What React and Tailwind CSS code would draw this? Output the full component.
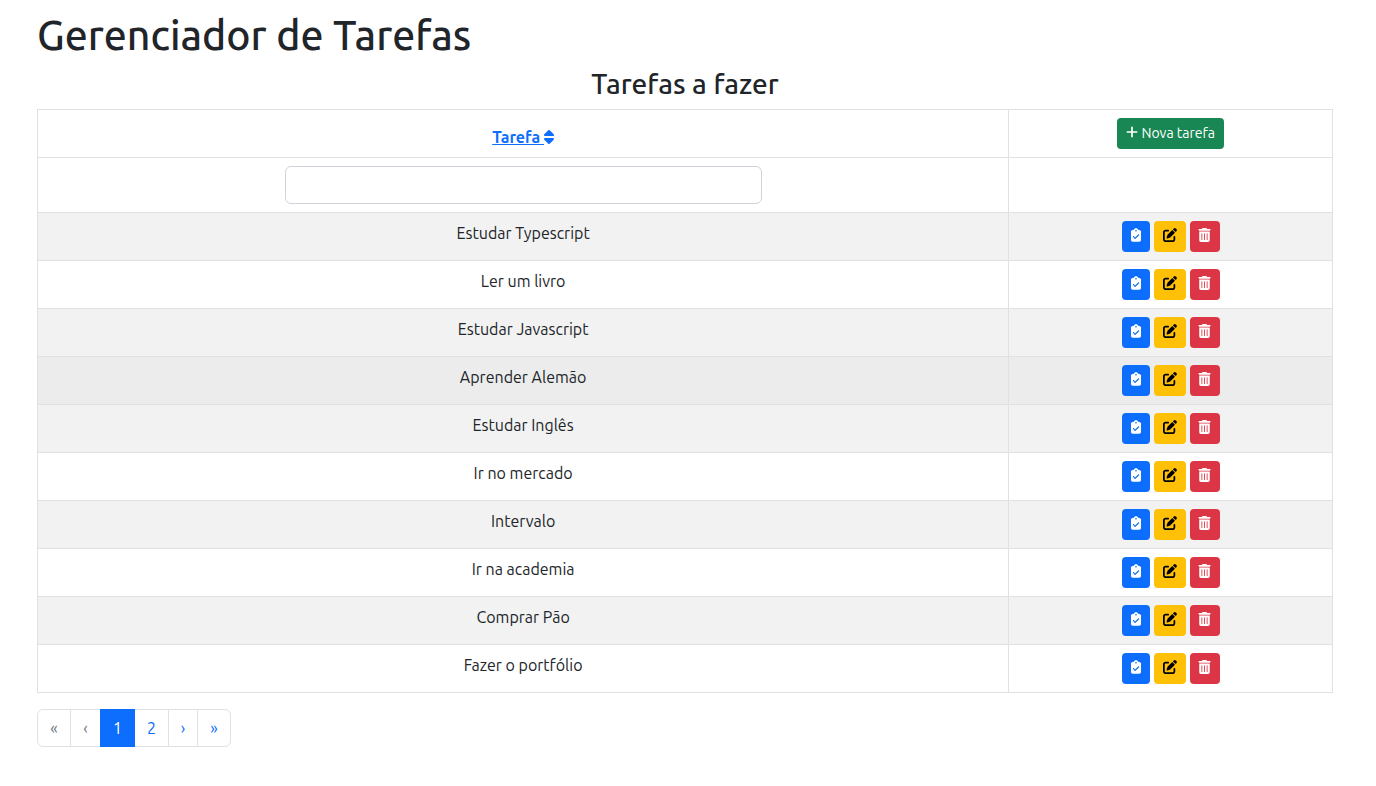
import React from 'react';
import {
  FaClipboardCheck,
  FaPenToSquare,
  FaPlus,
  FaSort,
  FaTrashCan,
} from 'react-icons/fa6';

const tasks = [
  'Estudar Typescript',
  'Ler um livro',
  'Estudar Javascript',
  'Aprender Alemão',
  'Estudar Inglês',
  'Ir no mercado',
  'Intervalo',
  'Ir na academia',
  'Comprar Pão',
  'Fazer o portfólio',
];

const highlighted = 'Aprender Alemão';

const cell = 'border border-[#dee2e6] p-2';
const smallButton = 'h-[31px] rounded border border-transparent text-sm leading-[21px]';
const icon = 'inline-block h-[14px] align-[-1px]';
const pageItem = 'flex h-[38px] items-center justify-center border border-[#dee2e6]';

function rowColor(task, index) {
  if (task === highlighted) return 'bg-[#ececec]';
  return index % 2 === 0 ? 'bg-[#f2f2f2]' : 'bg-white';
}

function TaskRow({ task, index }) {
  return (
    <tr className={rowColor(task, index)}>
      <td className={`${cell} align-top`}>{task}</td>
      <td className={`${cell} align-top`}>
        <div className="flex justify-center gap-1">
          <button type="button" aria-label="Concluir" className={`${smallButton} w-7 bg-[#0d6efd] text-white`}>
            <FaClipboardCheck className={`${icon} w-[10px]`} />
          </button>
          <button type="button" aria-label="Editar" className={`${smallButton} w-8 bg-[#ffc107] text-black`}>
            <FaPenToSquare className={`${icon} w-[14px]`} />
          </button>
          <button type="button" aria-label="Excluir" className={`${smallButton} w-[30px] bg-[#dc3545] text-white`}>
            <FaTrashCan className={`${icon} w-[13px]`} />
          </button>
        </div>
      </td>
    </tr>
  );
}

function Pagination() {
  return (
    <nav aria-label="Paginação" className="mt-4">
      <ul className="flex -space-x-px">
        <li className={`${pageItem} w-[34px] rounded-l-md text-[#6c757d]`}>«</li>
        <li className={`${pageItem} w-[31px] text-[#6c757d]`}>‹</li>
        <li className="relative">
          <a href="#1" aria-current="page" className="flex h-[38px] w-[35px] items-center justify-center bg-[#0d6efd] text-white">1</a>
        </li>
        <li><a href="#2" className={`${pageItem} w-[35px] text-[#0d6efd]`}>2</a></li>
        <li><a href="#next" className={`${pageItem} w-[30px] text-[#0d6efd]`}>›</a></li>
        <li><a href="#last" className={`${pageItem} w-[34px] rounded-r-md text-[#0d6efd]`}>»</a></li>
      </ul>
    </nav>
  );
}

export default function App() {
  return (
    <main className="bg-white pt-[11px] pr-[43px] pb-10 pl-[37px] font-[Ubuntu,'Noto_Sans',sans-serif] text-base text-[#212529]">
      <h1 className="mb-2 text-[41px] leading-[48px] font-medium">Gerenciador de Tarefas</h1>
      <h2 className="mb-2 text-center text-[28px] leading-[34px] font-medium">Tarefas a fazer</h2>
      <table className="w-full table-fixed border-collapse text-center">
        <colgroup>
          <col className="w-3/4" />
          <col className="w-1/4" />
        </colgroup>
        <thead>
          <tr>
            <th scope="col" className={`${cell} align-bottom`}>
              <a href="#sort" className="font-bold text-[#0d6efd] underline">
                Tarefa <FaSort className="inline-block h-4 w-[10px] align-[-2px]" />
              </a>
            </th>
            <th scope="col" className={`${cell} align-bottom font-normal`}>
              <div className="flex justify-center">
                <button type="button" className={`${smallButton} bg-[#198754] px-2 text-white`}>
                  <FaPlus className={`${icon} w-3`} /> Nova tarefa
                </button>
              </div>
            </th>
          </tr>
          <tr>
            <td className={cell}>
              <input
                type="text"
                aria-label="Filtrar tarefas"
                className="mx-auto block h-[38px] w-1/2 rounded-md border border-[#ced4da] bg-white px-3"
              />
            </td>
            <td className={cell} />
          </tr>
        </thead>
        <tbody>
          {tasks.map((task, index) => (
            <TaskRow key={task} task={task} index={index} />
          ))}
        </tbody>
      </table>
      <Pagination />
    </main>
  );
}
